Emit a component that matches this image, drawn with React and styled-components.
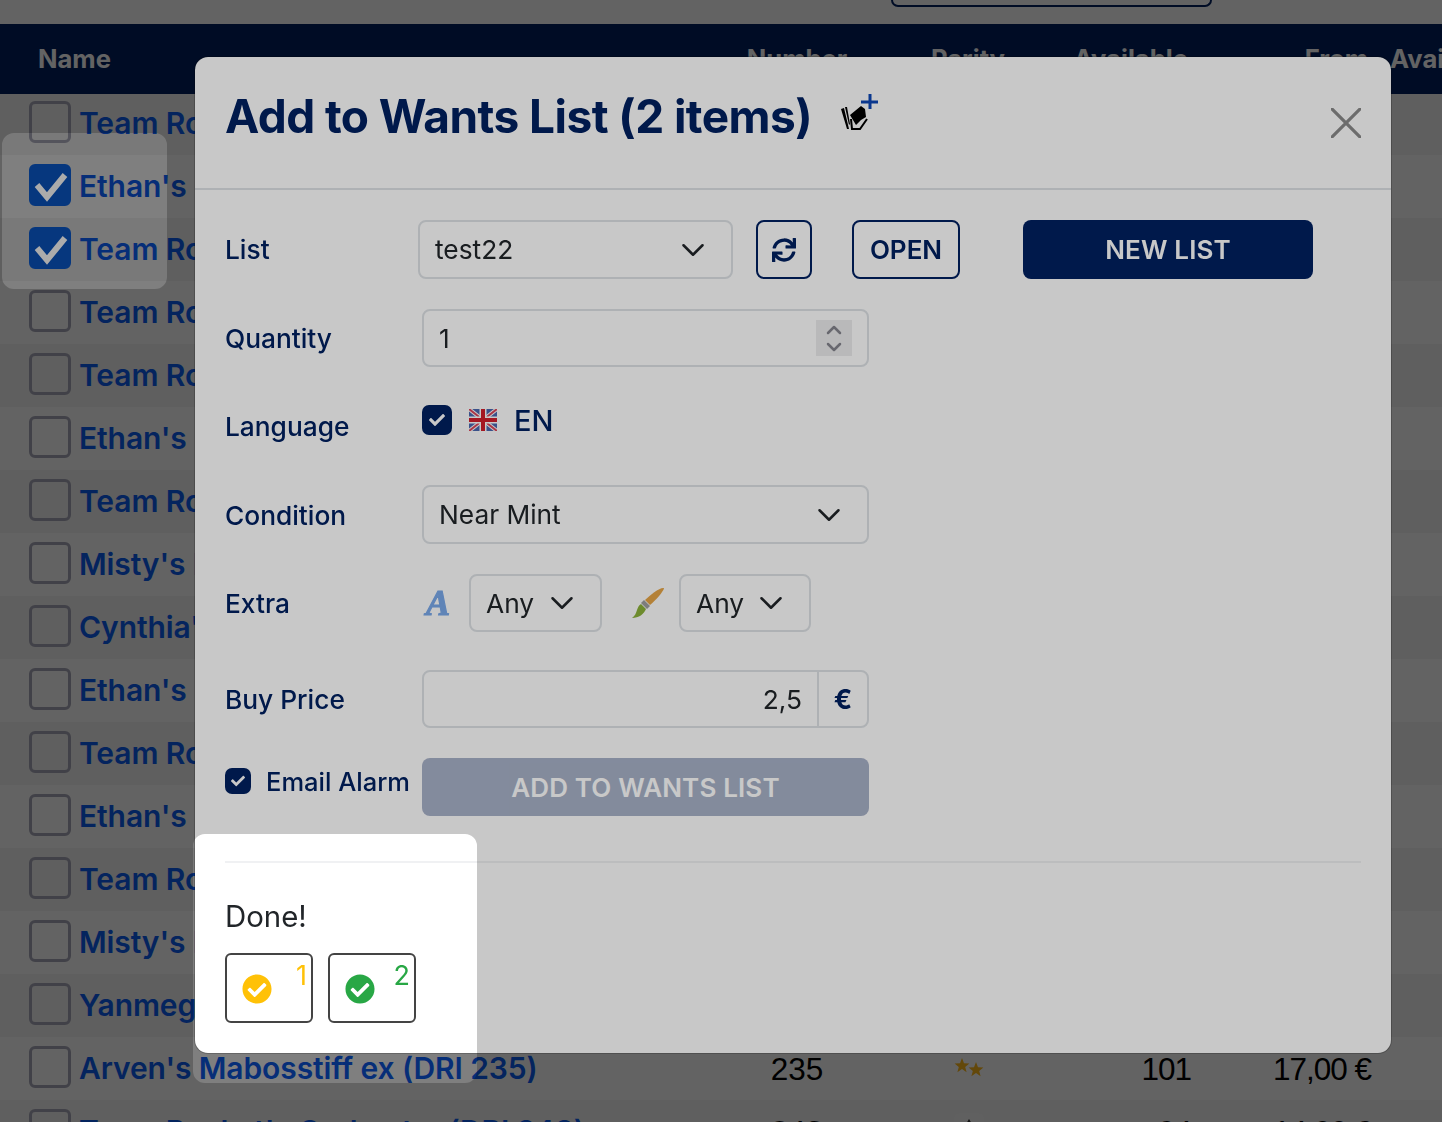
import React from 'react';
import styled, { createGlobalStyle } from 'styled-components';
import { FaSync, FaCheck, FaCheckCircle } from 'react-icons/fa';
import { ChevronDown, ChevronUp } from 'lucide-react';

const NAVY = '#002060';

const GlobalStyle = createGlobalStyle`
  html, body { margin: 0; height: 100%; overflow: hidden; background: #fff; }
  body { font-family: Inter, "Liberation Sans", sans-serif; color: #212529; }
  * { box-sizing: border-box; }
`;

const Page = styled.div`
  width: 100%;
  height: 1122px;
  overflow: hidden;
`;
const TopBar = styled.div`
  height: 24px;
  padding-left: 891px;
`;
const TopButton = styled.div`
  width: 321px;
  height: 7px;
  border: 2px solid ${NAVY};
  border-top: 0;
  border-radius: 0 0 8px 8px;
`;
const columns = '720px 154px 188px 129px 180px 1fr';
const HeaderRow = styled.div`
  display: grid;
  grid-template-columns: ${columns};
  height: 70px;
  padding-bottom: 2px;
  align-items: center;
  background: ${NAVY};
  color: #fff;
  font-size: 25.6px;
  font-weight: 700;
  white-space: nowrap;
  overflow: hidden;
`;
const HeadCell = styled.div`
  text-align: ${p => p.$align || 'center'};
  padding-left: ${p => p.$pad || 0}px;
  padding-right: ${p => (p.$align === 'right' ? 3 : 0)}px;
`;
const Row = styled.div`
  display: grid;
  grid-template-columns: ${columns};
  height: 63px;
  padding-top: 9px;
  align-items: start;
  background: ${p => (p.$odd ? '#f2f2f2' : '#fff')};
  &:first-child { height: 61px; padding-top: 7px; }
`;
const NameCell = styled.div`
  display: flex;
  align-items: center;
  gap: 8px;
  padding-left: 29px;
  height: 42px;
`;
const RowCheck = styled.div`
  flex: none;
  width: 42px;
  height: 42px;
  border-radius: 6px;
  display: flex;
  align-items: center;
  justify-content: center;
  border: 3px solid ${p => (p.$checked ? '#0d6efd' : '#a8a8b8')};
  background: ${p => (p.$checked ? '#0d6efd' : 'transparent')};
  svg { position: relative; z-index: 11; }
`;
const NameLink = styled.span`
  color: #0d5cf0;
  font-size: 30px;
  font-weight: 600;
  letter-spacing: -0.1px;
  line-height: 46px;
  padding-top: 2px;
  white-space: nowrap;
`;
const NumCell = styled.div`
  font-family: "Liberation Sans", Arial, sans-serif;
  font-size: 31.5px;
  line-height: 46px;
  color: #000;
  text-align: ${p => p.$align || 'center'};
  letter-spacing: ${p => (p.$align === 'right' ? '-1px' : '0')};
  white-space: nowrap;
`;
const RarityCell = styled.div`
  display: flex;
  justify-content: center;
  padding: ${p => p.$top}px 0 0 2px;
`;

const Backdrop = styled.div`
  position: fixed;
  inset: 0;
  z-index: 10;
  background: rgba(0, 0, 0, 0.5);
`;
const Modal = styled.div`
  position: fixed;
  z-index: 20;
  left: 194px;
  top: 56px;
  width: 1198px;
  height: 998px;
  background: #fff;
  background-clip: padding-box;
  border: 1px solid rgba(0, 0, 0, 0.2);
  border-radius: 14px;
`;
const ModalHeader = styled.div`
  height: 133px;
  padding: 0 30px 0 30px;
  display: flex;
  align-items: flex-start;
  border-bottom: 2px solid #dee2e6;
`;
const Title = styled.h2`
  margin: 30px 27px 0 0;
  font-size: 46px;
  line-height: 58px;
  font-weight: 700;
  letter-spacing: -0.55px;
  color: ${NAVY};
`;
const TitleIcon = styled.svg`
  margin-top: 35px;
`;
const CloseIcon = styled.svg`
  margin: 51px 0 0 auto;
`;
const ModalBody = styled.div`
  padding: 30px 30px 0;
`;
const FormRow = styled.div`
  display: flex;
  align-items: center;
  height: ${p => p.$height || 58}px;
  margin-bottom: ${p => p.$gap ?? 30}px;
`;
const Label = styled.label`
  flex: none;
  width: 197px;
  padding-top: ${p => p.$drop ?? 0}px;
  font-size: 26.3px;
  font-weight: 500;
  color: ${NAVY};
`;
const Field = styled.div`
  display: flex;
  align-items: center;
  height: 100%;
  flex: none;
  width: ${p => p.$width}px;
  margin-left: ${p => p.$left || 0}px;
  padding: 0 ${p => p.$right ?? 19}px 0 15px;
  border: 2px solid #dee2e6;
  border-radius: 8px;
  font-size: 26.3px;
  justify-content: space-between;
  color: #212529;
`;
const Spinner = styled.div`
  width: 36px;
  height: 36px;
  background: #ececee;
  color: #85858e;
  display: flex;
  flex-direction: column;
  align-items: center;
  justify-content: center;
  svg { margin: -3.5px 0; }
`;
const OutlineButton = styled.button`
  flex: none;
  width: ${p => p.$width}px;
  height: 100%;
  margin-left: ${p => p.$left}px;
  padding: 0;
  background: transparent;
  border: 2px solid ${NAVY};
  border-radius: 8px;
  color: ${NAVY};
  font: 600 26px Inter, sans-serif;
  display: flex;
  align-items: center;
  justify-content: center;
`;
const SolidButton = styled.button`
  flex: none;
  width: ${p => p.$width}px;
  height: 100%;
  margin-left: ${p => p.$left || 0}px;
  background: ${NAVY};
  opacity: ${p => (p.$disabled ? 0.35 : 1)};
  border: 0;
  border-radius: 8px;
  color: #fff;
  font: 600 26px Inter, sans-serif;
  letter-spacing: 0.15px;
`;
const SmallCheck = styled.span`
  flex: none;
  width: ${p => p.$size}px;
  height: ${p => p.$size}px;
  border-radius: 7px;
  background: ${NAVY};
  color: #fff;
  display: inline-flex;
  align-items: center;
  justify-content: center;
`;
const LanguageRow = styled.div`
  display: flex;
  align-items: center;
  gap: 17px;
  margin-top: -12px;
  color: ${NAVY};
  font-size: 29px;
  font-weight: 500;
`;
const FontGlyph = styled.span`
  flex: none;
  width: 47px;
  padding-left: 4px;
  font: italic 700 36px "Liberation Serif", serif;
  -webkit-text-stroke: 1.2px #7aa9ea;
  color: #7aa9ea;
`;
const BrushIcon = styled.svg`
  flex: none;
  margin: 0 14px 0 29px;
`;
const PriceValue = styled.span`
  flex: 1;
  text-align: right;
  padding-right: 15px;
`;
const EuroAddon = styled.div`
  flex: none;
  width: 50px;
  height: 100%;
  border-left: 2px solid #dee2e6;
  display: flex;
  align-items: center;
  justify-content: center;
  font-weight: 700;
  font-size: 27px;
  color: ${NAVY};
`;
const EmailLabel = styled.label`
  flex: none;
  width: 197px;
  display: flex;
  align-items: center;
  gap: 15px;
  margin-top: -12px;
  font-size: 25.5px;
  font-weight: 500;
  color: ${NAVY};
  white-space: nowrap;
`;
const Divider = styled.div`
  height: 2px;
  margin-top: -30px;
  position: relative;
  top: 45px;
  background: #f0f1f3;
`;
const Done = styled.div`
  margin-top: 81px;
  font-size: 29.4px;
  line-height: 36px;
`;
const ResultRow = styled.div`
  display: flex;
  gap: 15px;
  margin-top: 18px;
`;
const ResultBox = styled.div`
  position: relative;
  width: 88px;
  height: 70px;
  padding: 2px 0 0 15px;
  border: 2px solid #444;
  border-radius: 6px;
  display: flex;
  align-items: center;
  color: ${p => p.$color};
`;
const Badge = styled.span`
  position: absolute;
  top: 5px;
  right: 4px;
  font-size: 27px;
  line-height: 32px;
`;

const hole = (x, y, w, h, r) =>
  `M${x + r} ${y} H${x + w - r} A${r} ${r} 0 0 1 ${x + w} ${y + r} V${y + h - r} A${r} ${r} 0 0 1 ${x + w - r} ${y + h} H${x + r} A${r} ${r} 0 0 1 ${x} ${y + h - r} V${y + r} A${r} ${r} 0 0 1 ${x + r} ${y} Z`;

const maskPath = `M0 0 H1442 V1122 H0 Z ${hole(2, 133, 165, 156, 12)} ${hole(193, 834, 284, 249, 12)}`;

const TourMask = styled.div`
  position: fixed;
  inset: 0;
  z-index: 30;
  background: rgba(0, 0, 0, 0.215);
  clip-path: path(evenodd, "${maskPath}");
`;

const rows = [
  ["Team Rocket's Crobat ex (DRI 233)"],
  ["Ethan's Ho-Oh ex (DRI 239)", true],
  ["Team Rocket's Moltres ex (DRI 240)", true],
  ["Team Rocket's Nidoking ex (DRI 231)"],
  ["Team Rocket's Mewtwo ex (DRI 231)"],
  ["Ethan's Typhlosion (DRI 220)"],
  ["Team Rocket's Spidops (DRI 219)"],
  ["Misty's Psyduck (DRI 218)"],
  ["Cynthia's Garchomp ex (DRI 241)"],
  ["Ethan's Pichu (DRI 217)"],
  ["Team Rocket's Ampharos (DRI 216)"],
  ["Ethan's Sudowoodo (DRI 215)"],
  ["Team Rocket's Articuno (DRI 214)"],
  ["Misty's Magikarp (DRI 213)"],
  ["Yanmega ex (DRI 212)"],
  ["Arven's Mabosstiff ex (DRI 235)", false, '235', 'stars', '101', '17,00 €'],
  ["Team Rocket's Orchestra (DRI 243)", false, '243', 'diamond', '94', '14,00 €'],
];

function Rarity({ kind }) {
  if (kind === 'stars') {
    return (
      <RarityCell $top={11}>
        <svg width="30" height="20" viewBox="0 0 30 20" fill="#ffb81c">
          <path d="M8 1l2 5.2 5.4.3-4.2 3.4 1.4 5.3L8 12l-4.6 3.2 1.4-5.3L.6 6.5 6 6.200z" />
          <path d="M22 5l2 5.200 5.400.3-4.200 3.400 1.400 5.300L22 16l-4.600 3.200 1.400-5.300-4.200-3.400 5.400-.3z" />
        </svg>
      </RarityCell>
    );
  }
  if (kind === 'diamond') {
    return (
      <RarityCell $top={4}>
        <svg width="30" height="30" viewBox="0 0 30 30">
          <rect width="30" height="30" rx="6" fill="#f7f7f7" />
          <path d="M15 6l6 10-6 10-6-10z" fill="#333" />
        </svg>
      </RarityCell>
    );
  }
  return <div />;
}

function ListIcon() {
  return (
    <TitleIcon width="40" height="40" viewBox="0 0 40 40">
      <path d="M31 2v15M22 10h17" stroke="#0d47b5" strokeWidth="3" fill="none" />
      <path d="M2 17l3-1 5 21-2 0zM6 15h2l3 17-1 1z" fill="#000" />
      <path d="M11 23l11-9 4 3 1 8-5 3-5 5z" fill="#000" />
      <path d="M12 27l1 10h8l7-10" stroke="#000" strokeWidth="2" fill="none" />
    </TitleIcon>
  );
}

function UkFlag() {
  return (
    <svg width="28" height="22" viewBox="0 0 28 22">
      <rect width="28" height="22" fill="#4a68b0" />
      <path d="M0 0l28 22M28 0L0 22" stroke="#fff" strokeWidth="4" />
      <path d="M0 0l28 22M28 0L0 22" stroke="#d9465a" strokeWidth="2" />
      <path d="M14 0v22M0 11h28" stroke="#fff" strokeWidth="7" />
      <path d="M14 0v22M0 11h28" stroke="#d21f2c" strokeWidth="4" />
    </svg>
  );
}

function Brush() {
  return (
    <BrushIcon width="34" height="32" viewBox="0 0 34 32">
      <path d="M33 1c0 3-9 13-14 17l-5-5C19 8 29 0 33 1z" fill="#e6a547" />
      <path d="M13 13l6 6-3 3-6-6z" fill="#a0a0a0" />
      <path d="M10 17l5 5c-2 5-7 9-14 9 3-2 4-5 5-8 1-3 2-5 4-6z" fill="#8cb23a" />
    </BrushIcon>
  );
}

export default function App() {
  return (
    <>
      <GlobalStyle />
      <Page>
        <TopBar>
          <TopButton />
        </TopBar>
        <HeaderRow>
          <HeadCell $align="left" $pad={38}>Name</HeadCell>
          <HeadCell>Number</HeadCell>
          <HeadCell>Parity</HeadCell>
          <HeadCell $align="right">Available</HeadCell>
          <HeadCell $align="right">From</HeadCell>
          <HeadCell $align="left" $pad={19}>Availability</HeadCell>
        </HeaderRow>
        <div>
          {rows.map(([name, checked, num, rarity, avail, from], i) => (
            <Row key={i} $odd={i % 2 === 0}>
              <NameCell>
                <RowCheck $checked={checked}>
                  {checked && (
                    <svg width="36" height="36" viewBox="0 0 36 36">
                      <path d="M5 18l10 12L33 8" stroke="#ababab" strokeWidth="6" fill="none" />
                    </svg>
                  )}
                </RowCheck>
                <NameLink>{name}</NameLink>
              </NameCell>
              <NumCell>{num}</NumCell>
              <Rarity kind={rarity} />
              <NumCell $align="right">{avail}</NumCell>
              <NumCell $align="right">{from}</NumCell>
            </Row>
          ))}
        </div>
      </Page>
      <Backdrop />
      <Modal>
        <ModalHeader>
          <Title>Add to Wants List (2 items)</Title>
          <ListIcon />
          <CloseIcon width="30" height="30" viewBox="0 0 30 30">
            <path d="M1 1l28 28M29 1L1 29" stroke="#8a8a8a" strokeWidth="3.2" strokeLinecap="round" />
          </CloseIcon>
        </ModalHeader>
        <ModalBody>
          <FormRow $height={59}>
            <Label>List</Label>
            <Field $width={315} $left={-4}>
              test22
              <ChevronDown size={38} strokeWidth={1.6} />
            </Field>
            <OutlineButton $width={56} $left={23}>
              <FaSync size={24} />
            </OutlineButton>
            <OutlineButton $width={108} $left={40}>OPEN</OutlineButton>
            <SolidButton $width={290} $left={63}>NEW LIST</SolidButton>
          </FormRow>
          <FormRow>
            <Label>Quantity</Label>
            <Field $width={447} $right={15}>
              1
              <Spinner>
                <ChevronUp size={24} strokeWidth={2.5} />
                <ChevronDown size={24} strokeWidth={2.5} />
              </Spinner>
            </Field>
          </FormRow>
          <FormRow>
            <Label>Language</Label>
            <LanguageRow>
              <SmallCheck $size={30}><FaCheck size={16} /></SmallCheck>
              <UkFlag />
              EN
            </LanguageRow>
          </FormRow>
          <FormRow $height={59}>
            <Label $drop={1}>Condition</Label>
            <Field $width={447}>
              Near Mint
              <ChevronDown size={38} strokeWidth={1.6} />
            </Field>
          </FormRow>
          <FormRow $gap={38}>
            <Label>Extra</Label>
            <FontGlyph>A</FontGlyph>
            <Field $width={133}>
              Any
              <ChevronDown size={38} strokeWidth={1.6} />
            </Field>
            <Brush />
            <Field $width={132}>
              Any
              <ChevronDown size={38} strokeWidth={1.6} />
            </Field>
          </FormRow>
          <FormRow>
            <Label>Buy Price</Label>
            <Field $width={447} $right={0}>
              <PriceValue>2,5</PriceValue>
              <EuroAddon>€</EuroAddon>
            </Field>
          </FormRow>
          <FormRow>
            <EmailLabel>
              <SmallCheck $size={26}><FaCheck size={14} /></SmallCheck>
              Email Alarm
            </EmailLabel>
            <SolidButton $width={447} $disabled>ADD TO WANTS LIST</SolidButton>
          </FormRow>
          <Divider />
          <Done>Done!</Done>
          <ResultRow>
            <ResultBox $color="#ffc107">
              <FaCheckCircle size={30} />
              <Badge>1</Badge>
            </ResultBox>
            <ResultBox $color="#28a745">
              <FaCheckCircle size={30} />
              <Badge>2</Badge>
            </ResultBox>
          </ResultRow>
        </ModalBody>
      </Modal>
      <TourMask />
    </>
  );
}
